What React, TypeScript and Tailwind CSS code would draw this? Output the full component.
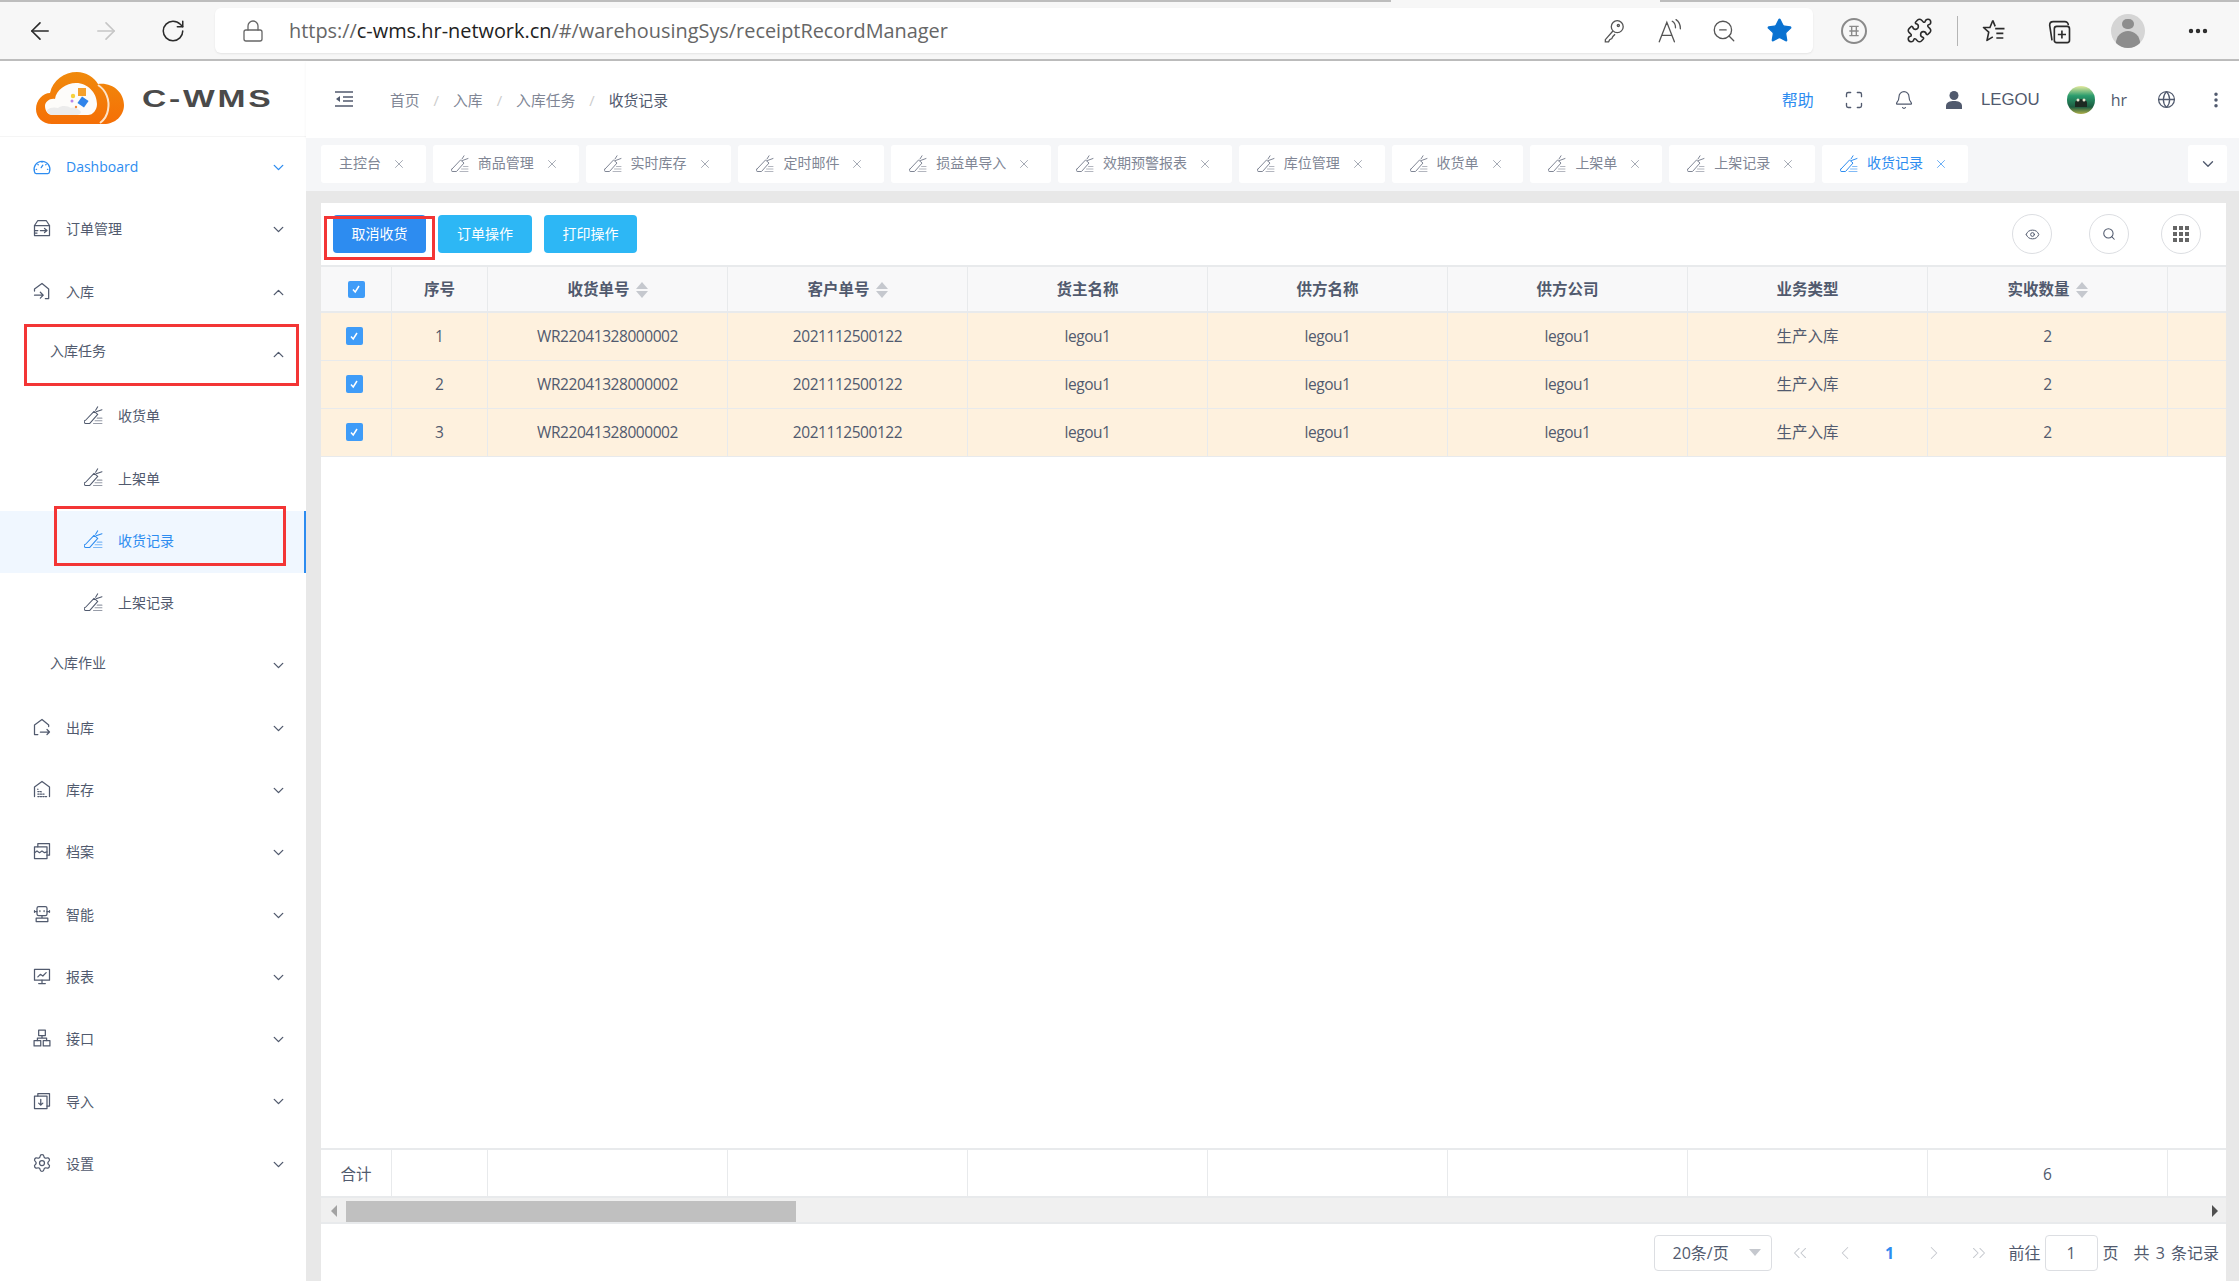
import type { ReactNode } from "react";
import {
  ArrowLeft,
  ArrowRight,
  Bell,
  ChevronDown,
  ChevronLeft,
  ChevronRight,
  ChevronUp,
  ChevronsLeft,
  ChevronsRight,
  EllipsisVertical,
  Eye,
  Globe,
  Lock,
  Maximize,
  MoreHorizontal,
  Puzzle,
  RotateCw,
  Search,
  Settings,
  Star,
  X,
  ZoomOut,
} from "lucide-react";

function Svg({ children, className }: { children: ReactNode; className?: string }) {
  return (
    <svg viewBox="0 0 24 24" fill="none" stroke="currentColor" strokeWidth="1.5" strokeLinecap="round" strokeLinejoin="round" className={className}>
      {children}
    </svg>
  );
}

function PenIcon({ className }: { className?: string }) {
  return (
    <svg viewBox="0 0 18 18" fill="none" stroke="currentColor" strokeWidth="1" strokeLinecap="round" strokeLinejoin="round" className={className}>
      <path d="M1.500 13.500 9.500 5l3.500 3-7.500 8.500h-3.500a1 1 0 0 1-.5-3Z" />
      <path d="M11 4 13 .8M11.500 5.500 17 3.500" />
      <path d="M9 16.500h8M10.500 14h6.500M12.500 11.500h4.500" opacity="0.6" />
    </svg>
  );
}

const icons: Record<string, ReactNode> = {
  dashboard: (
    <Svg className="h-[20px] w-[20px]">
      <path d="M3 19a9.500 9.500 0 1 1 18 0 2 2 0 0 1-2 2H5a2 2 0 0 1-2-2Z" />
      <path d="M12 7v.5M7 10l.5.5M17 10l-.5.5M11 14l2-3M5 16h.500M18.500 16h.500" />
    </Svg>
  ),
  order: (
    <Svg className="h-[20px] w-[20px]">
      <path d="M3 9 7 3h10l4 6v12H3V9Z" />
      <path d="M3 9h18M3 15h4M10 15h8M15 12.500l3 2.500-3 2.500M3 18h3" />
    </Svg>
  ),
  inbound: (
    <Svg className="h-[20px] w-[20px]">
      <path d="M3 9.500 12 3l8 6.500V21h-4M3 9.500V12" />
      <path d="M3 17h10M10 13.500l3.500 3.500-3.500 3.500" />
    </Svg>
  ),
  outbound: (
    <Svg className="h-[20px] w-[20px]">
      <path d="M3 21V9.500L12 3l8 6.500v2M3 21h4" />
      <path d="M10 18h11M18 15l3 3-3 3" />
    </Svg>
  ),
  stock: (
    <Svg className="h-[20px] w-[20px]">
      <path d="M3 21V9.500L12 3l9 6.500V21" />
      <path d="M7 12v.5M7 15h4v.5M7 18h8M7 21h12" strokeDasharray="1.500 1.500" />
    </Svg>
  ),
  archive: (
    <Svg className="h-[20px] w-[20px]">
      <rect x="3" y="7" width="15" height="14" />
      <path d="M7 7V3h14v14h-3M3 14l3-2 3 2 3-2 3 2 3-1" />
    </Svg>
  ),
  robot: (
    <Svg className="h-[20px] w-[20px]">
      <rect x="6" y="3" width="12" height="11" rx="2" />
      <path d="M3 8v2M21 8v2M6 9H3M21 9h-3M12 14v3M5 17h14v4H5z" />
      <path d="M9.500 8v1M14.500 8v1" />
    </Svg>
  ),
  report: (
    <Svg className="h-[20px] w-[20px]">
      <rect x="3" y="4" width="18" height="13" />
      <path d="M7 13l3-3 3 2 4-4M12 17v3M8 21h8" />
    </Svg>
  ),
  import: (
    <Svg className="h-[20px] w-[20px]">
      <rect x="3" y="6" width="15" height="15" />
      <path d="M7 6V3h14v15h-3M10.500 10v7M8 14.500l2.500 2.500 2.500-2.500" />
    </Svg>
  ),
  network: (
    <Svg className="h-[20px] w-[20px]">
      <rect x="8" y="2.500" width="8" height="6.500" />
      <rect x="2.500" y="15" width="8" height="6.500" />
      <rect x="13.500" y="15" width="8" height="6.500" />
      <path d="M12 9v3M6.500 15v-3h11v3" />
    </Svg>
  ),
};

type MenuItem = {
  label: string;
  icon?: string;
  level: number;
  open?: boolean;
  chevron?: boolean;
  active?: boolean;
  boxed?: "parent" | "child";
};

const menu: MenuItem[] = [
  { label: "Dashboard", icon: "dashboard", level: 0, chevron: true, active: false },
  { label: "订单管理", icon: "order", level: 0, chevron: true },
  { label: "入库", icon: "inbound", level: 0, chevron: true, open: true },
  { label: "入库任务", level: 1, chevron: true, open: true, boxed: "parent" },
  { label: "收货单", level: 2 },
  { label: "上架单", level: 2 },
  { label: "收货记录", level: 2, active: true, boxed: "child" },
  { label: "上架记录", level: 2 },
  { label: "入库作业", level: 1, chevron: true },
  { label: "出库", icon: "outbound", level: 0, chevron: true },
  { label: "库存", icon: "stock", level: 0, chevron: true },
  { label: "档案", icon: "archive", level: 0, chevron: true },
  { label: "智能", icon: "robot", level: 0, chevron: true },
  { label: "报表", icon: "report", level: 0, chevron: true },
  { label: "接口", icon: "network", level: 0, chevron: true },
  { label: "导入", icon: "import", level: 0, chevron: true },
  { label: "设置", icon: "settings", level: 0, chevron: true },
];

function MenuIcon({ name }: { name: string }) {
  if (name === "settings") return <Settings className="h-[20px] w-[20px]" strokeWidth={1.5} />;
  return <>{icons[name]}</>;
}

function Sidebar() {
  return (
    <aside className="flex w-[306px] shrink-0 flex-col bg-white">
      <div className="flex h-[76px] shrink-0 items-center border-b border-[#f5f5f5] pl-[36px]">
        <svg viewBox="0 0 88 53" className="h-[53px] w-[88px]">
          <defs>
            <linearGradient id="cloud" x1="0" y1="0" x2="0" y2="1">
              <stop offset="0" stopColor="#f08a0c" />
              <stop offset="1" stopColor="#f56f06" />
            </linearGradient>
          </defs>
          <path d="M16 52C6 52 0 45 0 37c0-9 7-16 14-16C17 8 28 0 41 0c9 0 17 5 21 12 14-2 26 8 26 21 0 11-9 19-20 19Z" fill="url(#cloud)" />
          <path d="M62 13c8 5 12 15 10 25-1 6-4 10-8 13" fill="none" stroke="#fde3c8" strokeWidth="2" />
          <path d="M17 43c-5 0-8-4-8-9 0-4 5-8 10-7C20 18 30 11 40 11c12 0 21 10 21 21 0 6-4 11-9 11Z" fill="#fdfcfa" />
          <path d="M11 38c3-3 8-3 11-2 4-3 10-2 13 0 3-1 6 0 8 2 3 1 2 5-2 5H16c-3 0-6-3-5-5Z" fill="#ececec" />
          <rect x="42" y="16" width="8" height="8" fill="#f5a12d" />
          <rect x="43" y="26" width="8" height="8" fill="#2f84ea" transform="rotate(35 47 30)" />
          <circle cx="37" cy="24" r="2.200" fill="#f6d23c" />
          <circle cx="36" cy="29" r="1.500" fill="#b784e8" />
          <circle cx="40" cy="35" r="1.200" fill="#f08a3c" />
        </svg>
        <span className="ml-[18px] origin-left scale-x-[1.4] font-['Liberation_Sans',sans-serif] text-[24px] leading-none font-bold tracking-[2px] text-[#4a4a4a]">C-WMS</span>
      </div>
      <nav className="flex flex-col">
        {menu.map((item) => {
          const blue = item.active || item.label === "Dashboard";
          return (
            <div
              key={item.label}
              className={[
                "relative flex h-[62.3px] items-center",
                item.level === 0 ? "pl-[32px] pb-[2px]" : item.level === 1 ? "pl-[50px] pb-[8px]" : "pl-[84px] pb-[2px]",
                item.active ? "border-r-2 border-[#2d8cf0] bg-[#f0f7ff]" : "",
                blue ? "text-[#2d8cf0]" : "text-[#515a6e]",
              ].join(" ")}
            >
              {item.icon ? (
                <span className="mr-[14px] mb-[2px] flex w-[20px] justify-center">
                  <MenuIcon name={item.icon} />
                </span>
              ) : null}
              {item.level === 2 ? <PenIcon className="mr-[15px] mb-[2px] h-[19px] w-[19px]" /> : null}
              <span className="text-[14px] leading-[20px]">{item.label}</span>
              {item.chevron ? (
                <span className="absolute right-[19px] top-[22px]">
                  {item.open ? <ChevronUp className="h-[17px] w-[17px]" strokeWidth={1.900} /> : <ChevronDown className="h-[17px] w-[17px]" strokeWidth={1.900} />}
                </span>
              ) : null}
              {item.boxed === "parent" ? <div className="absolute left-[24px] right-[7px] top-0 h-[62px] border-[3px] border-[#f33535]" /> : null}
              {item.boxed === "child" ? <div className="absolute left-[54px] right-[18px] top-[-5px] h-[60px] border-[3px] border-[#f33535]" /> : null}
            </div>
          );
        })}
      </nav>
    </aside>
  );
}

function BrowserBar() {
  return (
    <div className="shrink-0">
      <div className="flex h-[2px]">
        <div className="w-[1391px] bg-[#bdbdbd]" />
        <div className="w-[269px] bg-[#f7f7f7]" />
        <div className="flex-1 bg-[#bdbdbd]" />
      </div>
      <div className="flex h-[57px] items-center bg-[#f7f7f7] text-[#2b2b2b]">
        <div className="flex w-[215px] shrink-0 items-center pl-[26px]">
          <ArrowLeft className="h-[28px] w-[28px]" strokeWidth={1.4} />
          <ArrowRight className="ml-[38px] h-[28px] w-[28px] text-[#c6c6c6]" strokeWidth={1.4} />
          <RotateCw className="ml-[40px] h-[26px] w-[26px]" strokeWidth={1.4} />
        </div>
        <div className="flex h-[45px] w-[1598px] shrink-0 items-center rounded-[6px] bg-white shadow-[0_1px_2px_rgba(0,0,0,0.08)]">
          <Lock className="ml-[26px] h-[24px] w-[24px] text-[#666]" strokeWidth={1.3} />
          <span className="ml-[24px] text-[19.900px] leading-none text-[#666]">
            https://<span className="text-[#222]">c-wms.hr-network.cn</span>/#/warehousingSys/receiptRecordManager
          </span>
          <div className="ml-auto flex items-center gap-[29px] pr-[20px] text-[#555]">
            <svg viewBox="0 0 24 24" fill="none" stroke="currentColor" strokeWidth="1.2" className="h-[26px] w-[26px]">
              <circle cx="15" cy="8" r="5.500" />
              <path d="M11 12 4 20v2h3l1-2 2-1 1-2 2-2" />
              <circle cx="16" cy="7" r="1" />
            </svg>
            <svg viewBox="0 0 24 24" fill="none" stroke="currentColor" strokeWidth="1.2" strokeLinecap="round" className="h-[26px] w-[26px]">
              <path d="M3 22 10 4l7 18M5.500 16h9M15 3c2 1 3 3 3 6M18.500 1.500c3 2 4 5 4 8.500" />
            </svg>
            <ZoomOut className="h-[26px] w-[26px]" strokeWidth={1.2} />
            <Star className="h-[27px] w-[27px] text-[#0a72d1]" fill="#0a72d1" strokeWidth={1.2} />
          </div>
        </div>
        <div className="relative flex flex-1 items-center pl-[28px]">
          <span className="flex h-[26px] w-[26px] items-center justify-center rounded-full border-2 border-[#8a8a8a] text-[#8a8a8a]">
            <svg viewBox="0 0 12 12" fill="none" stroke="currentColor" strokeWidth="1.200" className="h-[14px] w-[14px]">
              <path d="M2 2h8M2 10h8M2 6h8M4 2v8M8 2v8" />
            </svg>
          </span>
          <Puzzle className="ml-[39px] h-[27px] w-[27px]" strokeWidth={1.4} />
          <div className="ml-[24px] h-[30px] w-px bg-[#b5b5b5]" />
          <svg viewBox="0 0 24 24" fill="none" stroke="currentColor" strokeWidth="1.400" strokeLinejoin="round" className="ml-[22px] h-[28px] w-[28px]">
            <path d="M11 3 8.500 9H3l4.500 4L6 20l5-3M13 10h8M14 14h6M14 18h6" />
            <path d="M11 3l2 5" />
          </svg>
          <svg viewBox="0 0 24 24" fill="none" stroke="currentColor" strokeWidth="1.400" strokeLinejoin="round" className="ml-[37px] h-[28px] w-[28px]">
            <path d="M6 20 4 7c0-2 1-3 3-3h10a3 3 0 0 1 3 3" />
            <rect x="8" y="8" width="13" height="14" rx="2" />
            <path d="M14.500 11.500v7M11 15h7" />
          </svg>
          <span className="ml-[38px] flex h-[34px] w-[34px] flex-col items-center overflow-hidden rounded-full bg-[#d5d5d5] pt-[5px]">
            <span className="h-[12px] w-[12px] rounded-full bg-[#8d8d8d]" />
            <span className="mt-[2px] h-[18px] w-[24px] rounded-t-full bg-[#8d8d8d]" />
          </span>
          <MoreHorizontal className="ml-[41px] h-[24px] w-[24px]" strokeWidth={2.4} />
        </div>
      </div>
      <div className="h-[2px] bg-[#bdbdbd]" />
    </div>
  );
}

function TopBar() {
  const crumbs = ["首页", "入库", "入库任务"];
  return (
    <div className="flex h-[77px] shrink-0 items-center bg-white text-[#515a6e] shadow-[0_1px_3px_rgba(0,0,0,0.05)]">
      <svg viewBox="0 0 20 20" fill="none" stroke="currentColor" strokeWidth="1.600" className="mb-[2px] ml-[28px] h-[20px] w-[20px]">
        <path d="M1 3h18M9 8h10M9 12h10M1 17h18" />
        <path d="M6 7v6L2 10Z" fill="currentColor" stroke="none" />
      </svg>
      <div className="ml-[36px] flex items-center text-[14.800px] leading-[20px]">
        {crumbs.map((c) => (
          <span key={c} className="flex items-center text-[#808695]">
            {c}
            <span className="mx-[14px] text-[#ccc]">/</span>
          </span>
        ))}
        <span>收货记录</span>
      </div>
      <div className="ml-auto flex items-center pr-[13px] text-[16px]">
        <span className="text-[#2d8cf0]">帮助</span>
        <Maximize className="ml-[30px] h-[20px] w-[20px]" strokeWidth={1.6} />
        <Bell className="ml-[30px] h-[20px] w-[20px]" strokeWidth={1.4} />
        <svg viewBox="0 0 20 20" className="ml-[30px] h-[20px] w-[20px] fill-[#515a6e]">
          <circle cx="10" cy="5.500" r="4.500" />
          <path d="M2 19v-3c0-4 4-5 8-5s8 1 8 5v3Z" />
        </svg>
        <span className="ml-[17px] font-['Liberation_Sans',sans-serif] text-[16.800px]">LEGOU</span>
        <svg viewBox="0 0 28 28" className="ml-[27px] h-[28px] w-[28px]">
          <defs>
            <linearGradient id="avatar" x1="0" y1="0" x2="0" y2="1">
              <stop offset="0" stopColor="#e6ea9f" />
              <stop offset="0.35" stopColor="#2a9c6d" />
              <stop offset="0.75" stopColor="#1c5c41" />
              <stop offset="1" stopColor="#b0b04a" />
            </linearGradient>
          </defs>
          <circle cx="14" cy="14" r="14" fill="url(#avatar)" />
          <path d="M8 17c0-5 12-5 12 0v4H8Z" fill="#1d2a22" />
          <circle cx="11" cy="14" r="1.500" fill="#e8e8d0" />
          <circle cx="17" cy="14" r="1.500" fill="#e8e8d0" />
        </svg>
        <span className="ml-[16px]">hr</span>
        <Globe className="ml-[30px] h-[19px] w-[19px]" strokeWidth={1.6} />
        <EllipsisVertical className="ml-[30px] h-[20px] w-[20px]" strokeWidth={2.2} />
      </div>
    </div>
  );
}

const tabs = ["主控台", "商品管理", "实时库存", "定时邮件", "损益单导入", "效期预警报表", "库位管理", "收货单", "上架单", "上架记录", "收货记录"];

function TabBar() {
  return (
    <div className="flex h-[53px] shrink-0 items-start bg-[#f5f6f8] pt-[7px] pl-[15px] pr-[12px]">
      <div className="flex gap-[7px]">
        {tabs.map((t, i) => {
          const active = i === tabs.length - 1;
          return (
            <div key={t} className={`flex h-[38px] items-center gap-[11px] rounded-[3px] bg-white pl-[18px] pr-[19.800px] text-[14px] leading-[20px] ${active ? "text-[#2d8cf0]" : "text-[#808695]"}`}>
              {i > 0 ? <PenIcon className="-mr-[2px] h-[18px] w-[18px]" /> : null}
              <span className="pb-[2px]">{t}</span>
              <X className="h-[14px] w-[14px]" strokeWidth={1.2} />
            </div>
          );
        })}
      </div>
      <div className="ml-auto flex h-[38px] w-[39px] items-center justify-center rounded-[3px] bg-white text-[#515a6e]">
        <ChevronDown className="h-[18px] w-[18px]" strokeWidth={1.800} />
      </div>
    </div>
  );
}

function Sorter() {
  return (
    <span className="ml-[6px] flex flex-col gap-[2px]">
      <span className="h-0 w-0 border-x-[6.500px] border-b-[7px] border-x-transparent border-b-[#c5c8ce]" />
      <span className="h-0 w-0 border-x-[6.500px] border-t-[7px] border-x-transparent border-t-[#c5c8ce]" />
    </span>
  );
}

function Check({ className }: { className?: string }) {
  return (
    <span className={`flex items-center justify-center rounded-[2px] bg-[#3f9cf8] ${className ?? ""}`}>
      <svg viewBox="0 0 12 12" fill="none" stroke="#fff" strokeWidth="1.500" className="h-[12px] w-[12px]">
        <path d="M3 6.500 5.200 9 9 3" />
      </svg>
    </span>
  );
}

const columns = [
  { label: "序号", width: "w-[96px]" },
  { label: "收货单号", width: "w-[240px]", sort: true },
  { label: "客户单号", width: "w-[240px]", sort: true },
  { label: "货主名称", width: "w-[240px]" },
  { label: "供方名称", width: "w-[240px]" },
  { label: "供方公司", width: "w-[240px]" },
  { label: "业务类型", width: "w-[240px]" },
  { label: "实收数量", width: "w-[240px]", sort: true },
];

const row = ["WR22041328000002", "2021112500122", "legou1", "legou1", "legou1", "生产入库", "2"];

function DataTable() {
  return (
    <div className="flex flex-1 flex-col text-[15.500px] text-[#515a6e]">
      <div className="flex h-[48px] shrink-0 border-y-2 border-[#e8eaec] bg-[#f8f8f9] font-semibold">
        <div className="flex w-[70px] items-center justify-center">
          <Check className="h-[17px] w-[17px]" />
        </div>
        {columns.map((c) => (
          <div key={c.label} className={`flex ${c.width} items-center justify-center border-l border-[#e8eaec] pt-[2px]`}>
            {c.label}
            {c.sort ? <Sorter /> : null}
          </div>
        ))}
        <div className="flex-1 border-l border-[#e8eaec]" />
      </div>
      {[1, 2, 3].map((n) => (
        <div key={n} className="flex h-[48px] shrink-0 border-b border-[#e8eaec] bg-[#fef1de]">
          <div className="flex w-[70px] items-center justify-center pr-[4px] pb-[2px]">
            <Check className="h-[18px] w-[17px]" />
          </div>
          <div className="flex w-[96px] items-center justify-center border-l border-[#e8eaec] pt-[1px]">{n}</div>
          {row.map((v, i) => (
            <div key={i} className={`flex w-[240px] items-center justify-center border-l border-[#e8eaec] pt-[1px] ${v === "生产入库" ? "" : "tracking-[-0.45px]"}`}>
              {v}
            </div>
          ))}
          <div className="flex-1 border-l border-[#e8eaec]" />
        </div>
      ))}
      <div className="flex-1" />
      <div className="flex h-[50px] shrink-0 border-y-2 border-[#e8eaec]">
        <div className="flex w-[70px] items-center justify-center pt-[3px]">合计</div>
        <div className="w-[96px] border-l border-[#e8eaec]" />
        <div className="w-[240px] border-l border-[#e8eaec]" />
        <div className="w-[240px] border-l border-[#e8eaec]" />
        <div className="w-[240px] border-l border-[#e8eaec]" />
        <div className="w-[240px] border-l border-[#e8eaec]" />
        <div className="w-[240px] border-l border-[#e8eaec]" />
        <div className="w-[240px] border-l border-[#e8eaec]" />
        <div className="flex w-[240px] items-center justify-center border-l border-[#e8eaec] pt-[3px]">6</div>
        <div className="flex-1 border-l border-[#e8eaec]" />
      </div>
      <div className="flex h-[26px] shrink-0 items-center border-b-2 border-[#e8eaec] bg-[#f0f0f0] pt-[2px]">
        <div className="flex w-[25px] justify-center">
          <span className="h-0 w-0 border-y-[6px] border-r-[6px] border-y-transparent border-r-[#a3a3a3]" />
        </div>
        <div className="h-[21px] w-[450px] bg-[#c0c0c0]" />
        <div className="flex flex-1 justify-end pr-[8px]">
          <span className="h-0 w-0 border-y-[6px] border-l-[6px] border-y-transparent border-l-[#505050]" />
        </div>
      </div>
    </div>
  );
}

function Pager() {
  return (
    <div className="flex h-[57px] shrink-0 items-center justify-end pr-[7px] text-[16px] text-[#515a6e]">
      <div className="flex h-[36px] w-[118px] items-center justify-between rounded-[4px] border border-[#dcdee2] pl-[18px] pr-[10px]">
        <span>20条/页</span>
        <span className="h-0 w-0 border-x-[6px] border-t-[7px] border-x-transparent border-t-[#c5c8ce]" />
      </div>
      <div className="flex items-center text-[#c5c8ce]">
        <ChevronsLeft className="ml-[17px] h-[22px] w-[22px]" strokeWidth={1.100} />
        <ChevronLeft className="ml-[23px] h-[22px] w-[22px]" strokeWidth={1.100} />
        <span className="ml-[24px] w-[20px] text-center font-bold text-[#2d8cf0]">1</span>
        <ChevronRight className="ml-[23px] h-[22px] w-[22px]" strokeWidth={1.100} />
        <ChevronsRight className="ml-[23px] h-[22px] w-[22px]" strokeWidth={1.100} />
      </div>
      <span className="ml-[19px]">前往</span>
      <div className="ml-[4px] flex h-[36px] w-[53px] items-center justify-center rounded-[4px] border border-[#dcdee2]">1</div>
      <span className="ml-[5px]">页</span>
      <span className="ml-[15px] [word-spacing:2px]">共 3 条记录</span>
    </div>
  );
}

export default function App() {
  return (
    <div className="flex h-[1281px] w-[2239px] flex-col overflow-hidden bg-[#e8e8e8] font-['Open_Sans','Noto_Sans_CJK_SC',sans-serif]">
      <BrowserBar />
      <div className="flex min-h-0 flex-1">
        <Sidebar />
        <main className="flex min-w-0 flex-1 flex-col">
          <TopBar />
          <TabBar />
          <div className="mt-[12px] ml-[15px] mr-[13px] flex min-h-0 flex-1 flex-col bg-white">
            <div className="flex h-[62px] shrink-0 items-center pl-[12px] pr-[25px]">
              <div className="relative">
                <button className="flex h-[38px] w-[93px] items-center justify-center rounded-[4px] bg-[#2d8cf0] pb-[2px] text-[14px] text-white">取消收货</button>
                <div className="absolute left-[-9px] right-[-9px] top-[1px] h-[44px] border-[3px] border-[#f33535]" />
              </div>
              <button className="ml-[12px] flex h-[38px] w-[94px] items-center justify-center rounded-[4px] bg-[#2db7f5] pb-[2px] text-[14px] text-white">订单操作</button>
              <button className="ml-[12px] flex h-[38px] w-[93px] items-center justify-center rounded-[4px] bg-[#2db7f5] pb-[2px] text-[14px] text-white">打印操作</button>
              <div className="ml-auto flex items-center text-[#515a6e]">
                <span className="flex h-[40px] w-[40px] items-center justify-center rounded-full border border-[#dcdee2]">
                  <Eye className="h-[15px] w-[15px]" strokeWidth={1.600} />
                </span>
                <span className="ml-[37px] flex h-[40px] w-[40px] items-center justify-center rounded-full border border-[#dcdee2]">
                  <Search className="h-[14px] w-[14px]" strokeWidth={1.800} />
                </span>
                <span className="ml-[32px] flex h-[40px] w-[40px] items-center justify-center rounded-full border border-[#dcdee2]">
                  <span className="grid grid-cols-3 gap-x-[2px] gap-y-[2px]">
                    {Array.from({ length: 9 }).map((_, i) => (
                      <span key={i} className="h-[4px] w-[4px] bg-[#666]" />
                    ))}
                  </span>
                </span>
              </div>
            </div>
            <DataTable />
            <Pager />
          </div>
        </main>
      </div>
    </div>
  );
}
